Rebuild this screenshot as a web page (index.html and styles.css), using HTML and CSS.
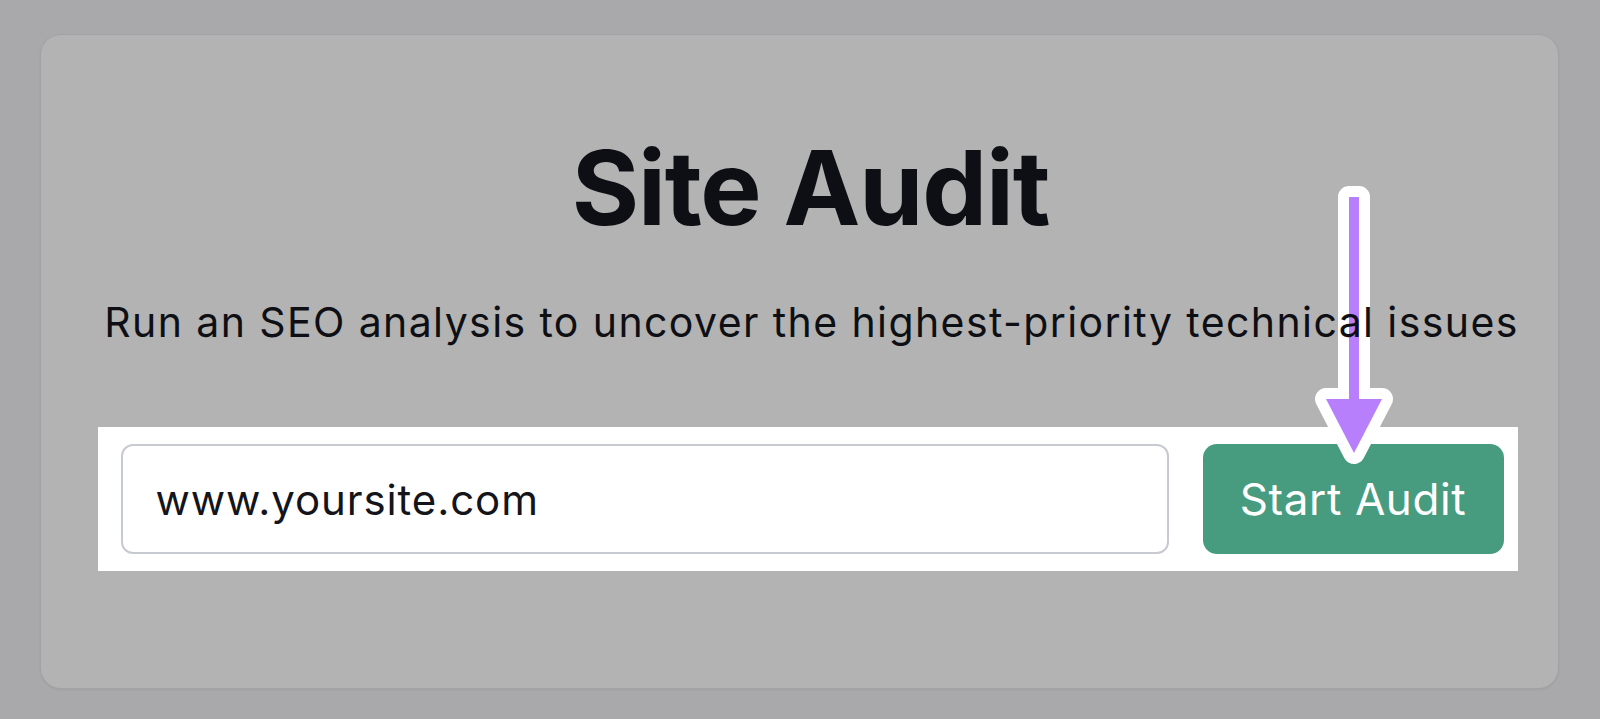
FILE: index.html
```html
<!DOCTYPE html>
<html lang="en">
<head>
<meta charset="utf-8">
<title>Site Audit</title>
<link rel="stylesheet" href="styles.css">
</head>
<body>
<main class="card">
  <h1 class="title">Site Audit</h1>
  <p class="subtitle">Run an SEO analysis to uncover the highest-priority technical issues</p>
  <div class="highlight">
    <div class="field">www.yoursite.com</div>
    <button class="start">Start Audit</button>
  </div>
  <svg class="arrow" width="110" height="290" viewBox="0 0 110 290" aria-hidden="true">
    <path d="M49 17 H59 V219 H82 L54 273 L26 219 H49 Z" fill="#b77ffb" stroke="#ffffff" stroke-width="22" stroke-linejoin="round" paint-order="stroke"/>
  </svg>
</main>
</body>
</html>
```

FILE: styles.css
```css
html, body {
  margin: 0;
  padding: 0;
}

body {
  background: #a9a9ab;
  width: 1600px;
  height: 719px;
  overflow: hidden;
  font-family: Inter, "Liberation Sans", sans-serif;
}

.card {
  position: relative;
  box-sizing: border-box;
  margin: 35px 0 0 41px;
  width: 1517px;
  height: 653px;
  background: #b3b3b3;
  border-radius: 20px;
  box-shadow: 0 0 0 1px #a3a3a5, 0 1px 3px rgba(0, 0, 0, 0.12);
  display: flex;
  flex-direction: column;
  align-items: center;
  padding: 0 0 0 20px;
}

.title {
  margin: 93px 0 0 2px;
  font-size: 103px;
  line-height: 120px;
  font-weight: 700;
  letter-spacing: -1.2px;
  color: #0e0f14;
}

.subtitle {
  position: relative;
  z-index: 2;
  margin: 49px 0 0 4px;
  font-size: 41px;
  line-height: 50px;
  font-weight: 400;
  letter-spacing: 1.4px;
  color: #0e0f14;
}

.highlight {
  position: relative;
  z-index: 0;
  box-sizing: border-box;
  margin: 80px 0 0 -4px;
  width: 1420px;
  height: 144px;
  background: #ffffff;
  display: flex;
  align-items: center;
  padding: 0 14px 0 23px;
  gap: 34px;
}

.field {
  box-sizing: border-box;
  width: 1048px;
  height: 110px;
  border: 2px solid #c8cad1;
  border-radius: 12px;
  background: #ffffff;
  padding: 0 0 0 33px;
  display: flex;
  align-items: center;
  font-size: 42px;
  letter-spacing: 0.9px;
  color: #14151a;
}

.start {
  box-sizing: border-box;
  width: 301px;
  height: 110px;
  border: 0;
  border-radius: 14px;
  background: #479c80;
  color: #ffffff;
  font-family: Inter, "Liberation Sans", sans-serif;
  font-size: 44px;
  font-weight: 400;
  letter-spacing: 0.6px;
  padding: 0;
}

.arrow {
  position: absolute;
  z-index: 1;
  left: 1259px;
  top: 145px;
}
```
